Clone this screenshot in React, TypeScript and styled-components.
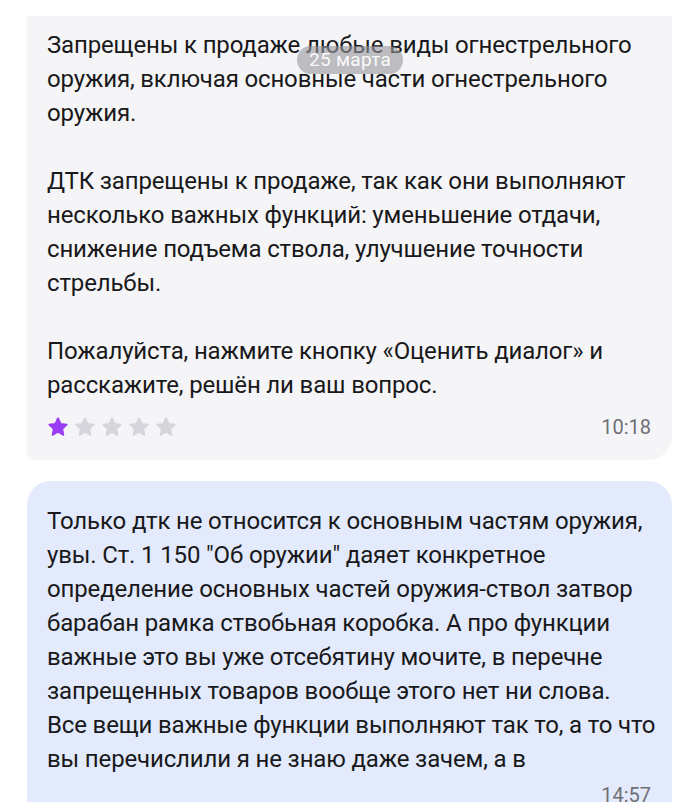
import styled, { createGlobalStyle } from 'styled-components'

const GlobalStyle = createGlobalStyle`
  html, body {
    margin: 0;
    padding: 0;
    background: #ffffff;
  }
  body {
    font-family: Roboto, "Noto Sans", "Liberation Sans", sans-serif;
    color: #19191b;
    -webkit-font-smoothing: antialiased;
  }
`

type Side = 'in' | 'out'

const Feed = styled.div`
  position: relative;
  display: flex;
  flex-direction: column;
  gap: 21px;
  height: 802px;
  overflow: hidden;
  padding: 16px 28px 0 27px;
  box-sizing: border-box;
`

const Bubble = styled.div<{ $side: Side }>`
  display: flex;
  flex-direction: column;
  background: ${(p) => (p.$side === 'in' ? '#f5f5f7' : '#e2eafc')};
  border-radius: ${(p) => (p.$side === 'in' ? '0 0 24px 6px' : '24px 24px 0 0')};
  padding: ${(p) => (p.$side === 'in' ? '12px 21px 16px 20px' : '23px 21px 16px 20px')};
`

const Text = styled.p`
  margin: 0;
  font-size: 24px;
  line-height: 34px;
  letter-spacing: -0.15px;
  white-space: pre;
`

const Footer = styled.div<{ $withRating?: boolean }>`
  display: flex;
  align-items: center;
  justify-content: ${(p) => (p.$withRating ? 'space-between' : 'flex-end')};
  height: 34px;
  margin-top: ${(p) => (p.$withRating ? '8px' : '2px')};
`

const Stars = styled.div`
  display: flex;
  gap: 7px;
  padding-left: 1px;
`

const Time = styled.span`
  font-size: 20px;
  color: #6f6f75;
`

const DatePill = styled.div`
  position: absolute;
  top: 46px;
  left: 297px;
  width: 106px;
  height: 28px;
  border-radius: 14px;
  background: rgba(150, 150, 156, 0.6);
  color: rgba(255, 255, 255, 0.95);
  font-size: 19px;
  line-height: 28px;
  text-align: center;
  letter-spacing: 0.3px;
`

const Star = ({ active }: { active: boolean }) => (
  <svg width="20" height="20" viewBox="1.5 1.5 21 21">
    <path
      d="M12 2.8l2.8 5.9 6.4.8-4.7 4.4 1.2 6.4L12 17.1l-5.7 3.2 1.2-6.4-4.7-4.4 6.4-.8z"
      fill={active ? '#9a3df5' : '#d6d5dc'}
      stroke={active ? '#9a3df5' : '#d6d5dc'}
      strokeWidth="1.8"
      strokeLinejoin="round"
    />
  </svg>
)

const supportText = `Запрещены к продаже любые виды огнестрельного
оружия, включая основные части огнестрельного
оружия.

ДТК запрещены к продаже, так как они выполняют
несколько важных функций: уменьшение отдачи,
снижение подъема ствола, улучшение точности
стрельбы.

Пожалуйста, нажмите кнопку «Оценить диалог» и
расскажите, решён ли ваш вопрос.`

const userText = `Только дтк не относится к основным частям оружия,
увы. Ст. 1 150 "Об оружии" даяет конкретное
определение основных частей оружия-ствол затвор
барабан рамка ствобьная коробка. А про функции
важные это вы уже отсебятину мочите, в перечне
запрещенных товаров вообще этого нет ни слова.
Все вещи важные функции выполняют так то, а то что
вы перечислили я не знаю даже зачем, а в`

export default function App() {
  return (
    <>
      <GlobalStyle />
      <Feed>
        <Bubble $side="in">
          <Text>{supportText}</Text>
          <Footer $withRating>
            <Stars>
              {[0, 1, 2, 3, 4].map((i) => (
                <Star key={i} active={i < 1} />
              ))}
            </Stars>
            <Time>10:18</Time>
          </Footer>
        </Bubble>
        <Bubble $side="out">
          <Text>{userText}</Text>
          <Footer>
            <Time>14:57</Time>
          </Footer>
        </Bubble>
        <DatePill>25 марта</DatePill>
      </Feed>
    </>
  )
}
